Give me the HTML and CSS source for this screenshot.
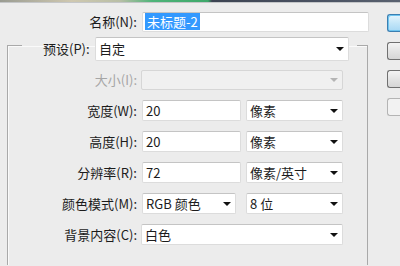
FILE: index.html
```html
<!DOCTYPE html>
<html lang="zh-CN">
<head>
    <meta charset="UTF-8">
    <meta name="viewport" content="width=device-width, initial-scale=1.0">
    <title>新建</title>
    <link rel="stylesheet" href="styles.css">
</head>
<body>
    <div class="topbar"></div>
    <div class="dialog">
        <main class="form">
            <div class="name_row">
                <label class="label">名称(N):</label>
                <div class="field name_field"><span class="selected">未标题-2</span></div>
            </div>
            <fieldset class="group">
                <legend class="preset">
                    <span class="preset_label">预设(P):</span>
                    <div class="field select preset_select">自定<span class="arrow"></span></div>
                </legend>
                <div class="grid">
                    <label class="label disabled">大小(I):</label>
                    <div class="field select span2 off"><span class="arrow"></span></div>

                    <label class="label">宽度(W):</label>
                    <div class="field">20</div>
                    <div class="field select">像素<span class="arrow"></span></div>

                    <label class="label">高度(H):</label>
                    <div class="field">20</div>
                    <div class="field select">像素<span class="arrow"></span></div>

                    <label class="label">分辨率(R):</label>
                    <div class="field">72</div>
                    <div class="field select">像素/英寸<span class="arrow"></span></div>

                    <label class="label">颜色模式(M):</label>
                    <div class="field select mode">RGB 颜色<span class="arrow"></span></div>
                    <div class="field select">8 位<span class="arrow"></span></div>

                    <label class="label">背景内容(C):</label>
                    <div class="field select span2">白色<span class="arrow"></span></div>
                </div>
            </fieldset>
        </main>
        <div class="buttons">
            <button class="btn default"></button>
            <button class="btn"></button>
            <button class="btn"></button>
            <button class="btn faded"></button>
        </div>
    </div>
</body>
</html>
```

FILE: styles.css
```css
* {
    margin: 0;
    padding: 0;
    box-sizing: border-box;
}
body {
    width: 400px;
    height: 266px;
    overflow: hidden;
    background-color: #ececec;
    font-family: "Noto Sans CJK SC", "Noto Sans", sans-serif;
    font-size: 13px;
    color: #1c1c1c;
}
.topbar {
    height: 3px;
    background: linear-gradient(90deg, #9a9c92 0%, #cfc8b0 18%, #b9bfa6 30%, #4fb47a 38%, #3ea86a 52%, #3d4452 53%, #4a5262 80%, #5a6270 100%);
    border-bottom: 1px solid #c4c6c8;
}
.dialog {
    display: flex;
    width: 400px;
}
.form {
    width: 380px;
    flex-shrink: 0;
}
.name_row {
    display: grid;
    grid-template-columns: 129px 227px;
    column-gap: 5px;
    align-items: center;
    padding-left: 8px;
    margin-top: 9px;
}
.label {
    text-align: right;
    white-space: nowrap;
    line-height: 20px;
}
.label.disabled {
    color: #a6a6a6;
}
.field {
    height: 21px;
    background-color: #fff;
    border: 1px solid #dcdcdc;
    border-top-color: #c4c4c4;
    border-radius: 2px;
    padding-left: 3px;
    line-height: 19px;
    white-space: nowrap;
    position: relative;
}
.name_field {
    height: 20px;
    padding-left: 2px;
    line-height: 17px;
}
.selected {
    display: inline-block;
    background-color: #3399ff;
    color: #fff;
    padding: 0 2px;
    line-height: 17px;
}
.group {
    margin: -3px 0 0 7px;
    width: 361px;
    height: 236px;
    border: 1px solid #a9a9a9;
    border-bottom: none;
    box-shadow: inset 1px 1px 0 #fafafa;
    padding: 8px 0 0 0;
}
.preset {
    display: flex;
    align-items: center;
    margin-left: 14px;
    padding: 8px 8px 0 21px;
}
.preset_label {
    width: 52px;
    line-height: 24px;
}
.preset_select {
    width: 254px;
    height: 24px;
    line-height: 22px;
}
.grid {
    display: grid;
    grid-template-columns: 129px 99px 97px;
    grid-auto-rows: 21px;
    column-gap: 5px;
    row-gap: 10px;
    align-items: center;
}
.span2 {
    grid-column: span 2;
    margin-left: -1px;
}
.mode {
    width: 94px;
}
.field.off {
    background-color: #f0f0f0;
    border-color: #d6d6d6;
    height: 20px;
}
.arrow {
    position: absolute;
    right: 4px;
    top: 50%;
    margin-top: -2px;
    border-left: 4px solid transparent;
    border-right: 4px solid transparent;
    border-top: 4px solid #111;
}
.off .arrow {
    border-top-color: #b4b4b4;
}
.buttons {
    display: flex;
    flex-direction: column;
    gap: 10px;
    margin-left: 7px;
    padding-top: 11px;
}
.btn {
    width: 13px;
    height: 18px;
    border: 1px solid #707070;
    border-right: none;
    border-radius: 3px 0 0 3px;
    background: linear-gradient(#f4f4f4, #e4e4e4 50%, #d6d6d6);
}
.btn.default {
    border-color: #3c7fb1;
    background: linear-gradient(#e6f5fd, #c4e6f8 50%, #a8d8f4);
    box-shadow: inset 1px 1px 0 #6fc4ef, inset 0 -1px 0 #6fc4ef;
}
.btn.faded {
    border-color: #b4b4b4;
    background: #f2f2f2;
}
```
